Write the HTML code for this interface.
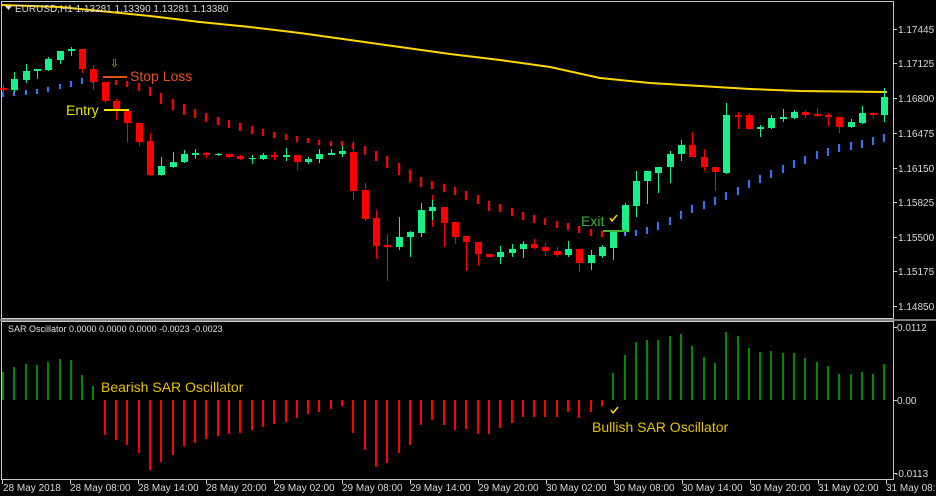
<!DOCTYPE html>
<html><head><meta charset="utf-8"><style>
html,body{margin:0;padding:0;background:#000;width:936px;height:496px;overflow:hidden}
svg{display:block}
text{font-family:"Liberation Sans",sans-serif}
</style></head><body>
<svg width="936" height="496" viewBox="0 0 936 496" xmlns="http://www.w3.org/2000/svg">
<rect width="936" height="496" fill="#000"/>
<!-- frames -->
<g fill="none" stroke="#c8c8c8" stroke-width="1">
<path d="M1.5 1.5 H893.5 V318.5 H1.5 Z"/>
<path d="M1.5 321.5 H893.5 V479.5 H1.5 Z"/>
</g>
<rect x="0" y="319" width="936" height="2" fill="#808080"/>
<!-- price axis ticks -->
<g stroke="#c8c8c8" stroke-width="1">
<path d="M893 29.5h4M893 63.5h4M893 98.5h4M893 133.5h4M893 168.5h4M893 202.5h4M893 237.5h4M893 271.5h4M893 306.5h4M893 327.5h4M893 400.5h4M893 473.5h4"/>
<path d="M2.5 479v5M70.5 479v5M138.5 479v5M206.5 479v5M274.5 479v5M342.5 479v5M410.5 479v5M478.5 479v5M546.5 479v5M614.5 479v5M682.5 479v5M750.5 479v5M818.5 479v5M886.5 479v5"/>
</g>
<g fill="#d8d8d8" font-size="10">
<text x="898" y="33">1.17445</text><text x="898" y="67">1.17125</text><text x="898" y="102">1.16800</text>
<text x="898" y="137">1.16475</text><text x="898" y="172">1.16150</text><text x="898" y="206">1.15825</text>
<text x="898" y="241">1.15500</text><text x="898" y="275">1.15175</text><text x="898" y="310">1.14850</text>
<text x="897" y="331">0.0112</text><text x="897" y="404">0.00</text><text x="895" y="477">-0.0113</text>
<text x="3" y="491">28 May 2018</text><text x="70" y="491">28 May 08:00</text><text x="138" y="491">28 May 14:00</text>
<text x="206" y="491">28 May 20:00</text><text x="274" y="491">29 May 02:00</text><text x="342" y="491">29 May 08:00</text>
<text x="410" y="491">29 May 14:00</text><text x="478" y="491">29 May 20:00</text><text x="546" y="491">30 May 02:00</text>
<text x="614" y="491">30 May 08:00</text><text x="682" y="491">30 May 14:00</text><text x="750" y="491">30 May 20:00</text>
<text x="818" y="491">31 May 02:00</text><text x="886" y="491">31 May 08:00</text>
</g>
<!-- MA -->
<polyline fill="none" stroke="#ffd800" stroke-width="2" points="2,5 60,7 100,11 150,16 200,22 250,27 300,33 350,40 400,47 450,54 500,60 550,67 600,78 650,83 700,86 750,89 800,91 887,92"/>
<!-- header -->
<path d="M5 6h7l-3.5 4z" fill="#d8d8d8"/>
<text x="15" y="12" font-size="10" fill="#d8d8d8">EURUSD,H1  1.13281 1.13390 1.13281 1.13380</text>
<text x="8" y="332" font-size="9" fill="#e0e0e0">SAR Oscillator 0.0000 0.0000 0.0000 -0.0023 -0.0023</text>
<!-- SAR dots blue -->
<path stroke="#3b6ef0" stroke-width="2.2" fill="none" d="M3 92v5M14 91v5M26 90v5M37 89v5M48 87v5M60 84v5M71 81v6M82 78v6M93 77v6
M625 230v6M636 230v6M647 227v7M658 222v8M670 217v8M681 211v8M692 205v8M704 201v8M715 197v8M726 192v8M738 187v8M749 180v8M760 175v8M771 170v8M783 165v8M794 160v8M805 156v8M817 151v8M828 148v8M839 144v8M851 142v8M862 140v8M873 137v8M884 134v8"/>
<!-- SAR dots red -->
<path stroke="#ff0000" stroke-width="2.2" fill="none" d="M116 80v5M127 81v6M139 83v8M150 87v9M161 93v11M173 99v11M184 104v11M195 109v9M206 113v9M218 117v8M229 120v8M240 123v8M252 126v8M263 129v7M274 132v6M286 134v6M297 136v6M308 138v5M319 140v5M331 141v5M342 141v5M353 143v6M365 146v9M376 151v10M387 156v12M399 163v12M410 170v12M421 177v10M432 181v8M444 184v8M455 187v8M466 191v9M478 195v9M489 201v10M500 204v8M512 208v8M523 212v8M534 215v8M545 218v7M557 221v7M568 223v7M579 226v7M591 229v7M602 231v6M613 233v6"/>
<!-- candles -->
<g id="c"></g>
<g stroke-width="1" shape-rendering="crispEdges">
<!-- red wicks -->
<path stroke="#ff0000" d="M3.5 85v10M82.5 49v24M93.5 65v25M105.5 82v21M116.5 99v21M127.5 111v31M139.5 123v23M150.5 133v43M206.5 152v6M229.5 154v4M240.5 155v5M274.5 152v8M297.5 155v15M353.5 141v59M365.5 183v38M376.5 210v49M387.5 234v47M432.5 195v32M444.5 220v27M455.5 227v17M466.5 241v30M478.5 246v20M534.5 239v10M545.5 243v13M557.5 247v10M579.5 249v23M692.5 132v25M704.5 149v22M715.5 167v24M738.5 112v17M749.5 113v17M805.5 110v8M817.5 108v9M828.5 113v13M839.5 117v16M873.5 112v7"/>
<path stroke="#18f088" d="M14.5 72v20M26.5 64v19M37.5 69v10M48.5 57v14M60.5 51v13M71.5 47v9M161.5 157v19M173.5 152v16M184.5 150v13M195.5 149v10M218.5 153v3M252.5 155v9M263.5 153v7M286.5 148v13M308.5 157v7M319.5 149v14M331.5 149v6M342.5 146v11M399.5 217v33M410.5 231v26M421.5 203v34M432.5 200v20M500.5 246v18M512.5 244v13M523.5 241v17M568.5 241v16M591.5 250v20M602.5 245v13M613.5 230v30M625.5 203v32M636.5 171v46M647.5 171v33M658.5 167v26M670.5 151v32M681.5 140v21M726.5 103v71M760.5 125v12M771.5 115v14M783.5 109v13M794.5 110v9M851.5 119v9M862.5 106v18M884.5 88v34"/>
</g>
<g fill="#ff0000" shape-rendering="crispEdges">
<rect x="0" y="88" width="7" height="2"/><rect x="79" y="49" width="7" height="20"/><rect x="90" y="69" width="7" height="13"/>
<rect x="102" y="82" width="7" height="19"/><rect x="113" y="101" width="7" height="10"/><rect x="124" y="111" width="7" height="12"/>
<rect x="136" y="123" width="7" height="19"/><rect x="147" y="141" width="7" height="34"/><rect x="203" y="153" width="7" height="2"/>
<rect x="226" y="154" width="7" height="3"/><rect x="237" y="156" width="7" height="3"/><rect x="271" y="155" width="7" height="2"/>
<rect x="294" y="155" width="7" height="7"/><rect x="350" y="152" width="7" height="39"/><rect x="362" y="190" width="7" height="29"/>
<rect x="373" y="218" width="7" height="28"/><rect x="384" y="245" width="7" height="2"/><rect x="441" y="207" width="7" height="16"/>
<rect x="452" y="222" width="7" height="15"/><rect x="463" y="236" width="7" height="6"/><rect x="475" y="242" width="7" height="12"/>
<rect x="486" y="254" width="7" height="3"/><rect x="531" y="244" width="7" height="4"/><rect x="542" y="247" width="7" height="4"/>
<rect x="554" y="251" width="7" height="4"/><rect x="576" y="249" width="7" height="14"/><rect x="689" y="145" width="7" height="12"/>
<rect x="701" y="157" width="7" height="10"/><rect x="712" y="167" width="7" height="5"/><rect x="735" y="115" width="7" height="2"/>
<rect x="746" y="115" width="7" height="14"/><rect x="802" y="112" width="7" height="3"/><rect x="814" y="114" width="7" height="2"/>
<rect x="825" y="115" width="7" height="2"/><rect x="836" y="117" width="7" height="10"/><rect x="870" y="113" width="7" height="2"/>
</g>
<g fill="#18f088" shape-rendering="crispEdges">
<rect x="11" y="79" width="7" height="11"/><rect x="23" y="71" width="7" height="9"/><rect x="34" y="69" width="7" height="2"/>
<rect x="45" y="59" width="7" height="11"/><rect x="57" y="51" width="7" height="9"/><rect x="68" y="49" width="7" height="2"/>
<rect x="158" y="166" width="7" height="9"/><rect x="170" y="162" width="7" height="5"/><rect x="181" y="154" width="7" height="8"/>
<rect x="192" y="153" width="7" height="2"/><rect x="215" y="154" width="7" height="1"/><rect x="249" y="158" width="7" height="1"/>
<rect x="260" y="155" width="7" height="4"/><rect x="283" y="155" width="7" height="2"/><rect x="305" y="159" width="7" height="3"/>
<rect x="316" y="154" width="7" height="5"/><rect x="328" y="153" width="7" height="2"/><rect x="339" y="151" width="7" height="3"/>
<rect x="396" y="237" width="7" height="10"/><rect x="407" y="232" width="7" height="5"/><rect x="418" y="210" width="7" height="23"/>
<rect x="429" y="207" width="7" height="4"/><rect x="497" y="252" width="7" height="5"/><rect x="509" y="249" width="7" height="4"/>
<rect x="520" y="244" width="7" height="5"/><rect x="565" y="249" width="7" height="6"/><rect x="588" y="255" width="7" height="8"/>
<rect x="599" y="247" width="7" height="9"/><rect x="610" y="232" width="7" height="16"/><rect x="622" y="205" width="7" height="27"/>
<rect x="633" y="181" width="7" height="25"/><rect x="644" y="171" width="7" height="10"/><rect x="655" y="167" width="7" height="6"/>
<rect x="667" y="154" width="7" height="13"/><rect x="678" y="145" width="7" height="9"/><rect x="723" y="115" width="7" height="58"/>
<rect x="757" y="127" width="7" height="2"/><rect x="768" y="118" width="7" height="10"/><rect x="780" y="117" width="7" height="2"/>
<rect x="791" y="112" width="7" height="6"/><rect x="848" y="122" width="7" height="5"/><rect x="859" y="113" width="7" height="10"/>
<rect x="881" y="97" width="7" height="18"/>
</g>
<!-- annotations main -->
<path d="M103 77h24" stroke="#e8501a" stroke-width="2"/>
<text x="130" y="81" font-size="14" fill="#e8501a">Stop Loss</text>
<text x="110" y="67" font-size="11" fill="#c8b400">⇩</text>
<path d="M104 110h25" stroke="#ffe600" stroke-width="2"/>
<text x="66" y="115" font-size="14" fill="#e6e600">Entry</text>
<text x="581" y="226" font-size="14" fill="#3cb43c">Exit</text>
<path d="M610 218l2 3 5-6" stroke="#ffd800" stroke-width="1.5" fill="none"/>
<path d="M603 231h24" stroke="#3cb43c" stroke-width="2"/>
<!-- oscillator bars green -->
<path stroke="#008a00" stroke-width="2" fill="none" d="M3 400v-28M14 400v-33M26 400v-36M37 400v-35M48 400v-38M60 400v-41M71 400v-40M82 400v-25M93 400v-14
M613 400v-27M625 400v-45M636 400v-58M647 400v-60M658 400v-60M670 400v-64M681 400v-66M692 400v-54M704 400v-43M715 400v-37M726 400v-68M738 400v-64M749 400v-52M760 400v-48M771 400v-49M783 400v-47M794 400v-47M805 400v-42M817 400v-38M828 400v-34M839 400v-26M851 400v-26M862 400v-28M873 400v-26M884 400v-36"/>
<path stroke="#ff0000" stroke-width="2" fill="none" d="M105 400v35M116 400v40M127 400v45M139 400v53M150 400v70M161 400v62M173 400v55M184 400v46M195 400v43M206 400v39M218 400v36M229 400v34M240 400v33M252 400v30M263 400v27M274 400v24M286 400v22M297 400v18M308 400v14M319 400v12M331 400v9M342 400v6M353 400v33M365 400v50M376 400v67M387 400v63M399 400v53M410 400v45M421 400v25M432 400v20M444 400v25M455 400v30
M466 400v29M478 400v34M489 400v34M500 400v28M512 400v23M523 400v17M534 400v17M545 400v17M557 400v17M568 400v12M579 400v18M591 400v12M602 400v6"/>
<text x="101" y="392" font-size="14" fill="#e6c200">Bearish SAR Oscillator</text>
<path d="M611 410l2 3 5-6" stroke="#ffd800" stroke-width="1.5" fill="none"/>
<text x="592" y="432" font-size="14" fill="#e6c200">Bullish SAR Oscillator</text>
</svg>
</body></html>
